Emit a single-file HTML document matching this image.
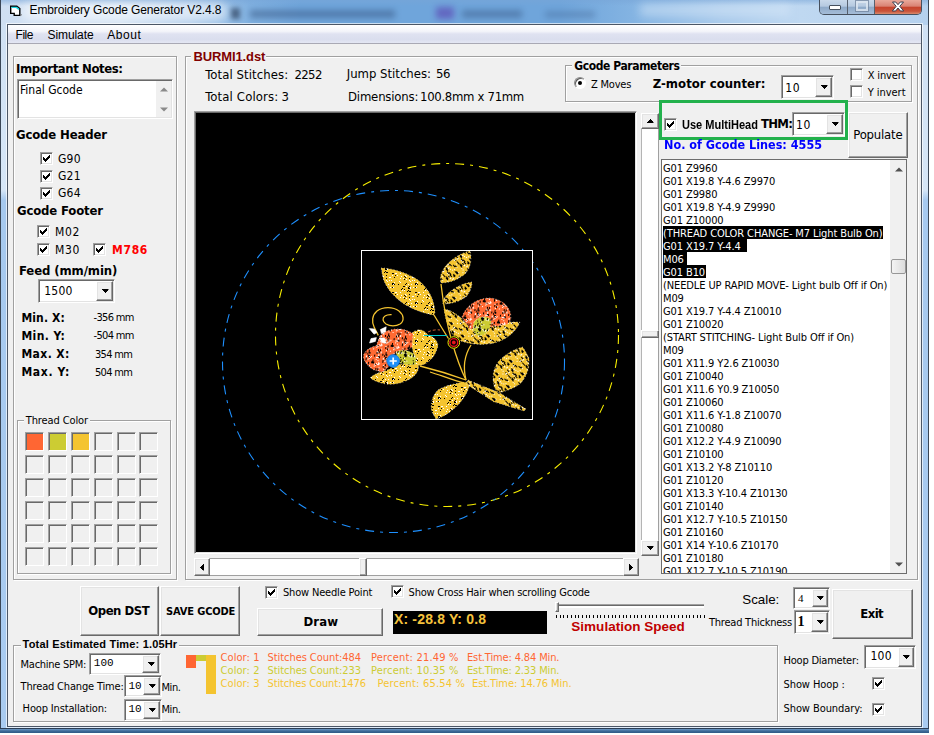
<!DOCTYPE html>
<html lang="en"><head><meta charset="utf-8"><title>Embroidery Gcode Generator V2.4.8</title>
<style>
html,body{margin:0;padding:0}
body{width:934px;height:735px;background:#fff;overflow:hidden;position:relative}
#win{position:absolute;left:0;top:0;width:929px;height:733px;background:linear-gradient(180deg,#cfe0f3 0,#d6e6f7 190px,#a6c9ef 200px,#a9cbf0 100%);overflow:hidden}
.wb{background:#3a4656}
#win div,#win span,#win svg.ar,#win svg.ck{position:absolute}
#tb{left:1px;top:0;width:927px;height:25px;background:linear-gradient(90deg,#cfdff2 0,#d3e2f3 120px,#b4cfec 190px,#7fb0e0 250px,#6fa5db 300px,#6fa5db 560px,#86b5e3 640px,#a9caeb 720px,#bfd8f1 800px,#b5d1ee 927px)}
#tbtop{left:1px;top:0;width:927px;height:6px;background:linear-gradient(180deg,rgba(120,165,215,.55),rgba(120,165,215,0))}
#tbglow{left:22px;top:3px;width:205px;height:17px;background:#fff;opacity:.55;filter:blur(5px);border-radius:8px}
#tbsm{left:250px;top:10px;width:145px;height:8px;background:#34527f;opacity:.5;filter:blur(3px)}
#tbsm3{left:462px;top:10px;width:60px;height:8px;background:#34527f;opacity:.45;filter:blur(3px)}
#tbsm4{left:436px;top:7px;width:18px;height:12px;background:#5a3fb0;opacity:.6;filter:blur(3px)}
#tbsm5{left:231px;top:8px;width:9px;height:11px;background:#1f2f4a;opacity:.6;filter:blur(2.5px)}
#tbsm6{left:545px;top:11px;width:50px;height:7px;background:#34527f;opacity:.3;filter:blur(3px)}
#tbsm2{left:640px;top:4px;width:150px;height:12px;background:#dcebfa;opacity:.5;filter:blur(5px)}
#frameB{left:0;top:728px;width:929px;height:5px;background:linear-gradient(180deg,#2c3e55 0,#2c3e55 1px,#6f9cc8 1px,#3f6a97 60%,#2f5a86)}
#clienthl{left:6px;top:23px;width:917px;height:705px;box-sizing:border-box;border:1px solid rgba(255,255,255,.65)}
#client{left:7px;top:24px;width:915px;height:703px;box-sizing:border-box;border:1px solid #4b5666;background:#f0f0f0}
#menu{left:8px;top:25px;width:913px;height:19px;background:linear-gradient(180deg,#fff 0,#f3f4fa 35%,#dfe2f1 50%,#dadeee 80%,#e4e7f3 100%);border-bottom:1px solid #a9a9b4;box-sizing:border-box}
#capb{left:819px;top:0;width:103px;height:15px;border:1px solid #46505e;border-top:none;border-radius:0 0 5px 5px;box-sizing:border-box;overflow:hidden;background:#9db9d8}
#cmin{left:0;top:0;width:27px;height:14px;background:linear-gradient(180deg,#c9d9ea 0,#b5c9e0 45%,#8ea9c8 50%,#a5bdd8 100%);border-right:1px solid #56606e}
#cmax{left:28px;top:0;width:26px;height:14px;background:linear-gradient(180deg,#c9d9ea 0,#b5c9e0 45%,#8ea9c8 50%,#a5bdd8 100%);border-right:1px solid #56606e}
#ccls{left:55px;top:0;width:46px;height:14px;background:linear-gradient(180deg,#e9a99b 0,#d98273 45%,#c6432c 50%,#c9533a 80%,#d98a6c 100%)}
#cmin i{position:absolute;left:9px;top:5px;width:10px;height:3px;background:#fff;border:1px solid #46505e;border-radius:1px}
#cmax i{position:absolute;left:8px;top:1px;width:8px;height:6px;border:2px solid #dfe8f2;outline:1px solid #7689a2;opacity:.8}
#ccls svg{position:absolute;left:16px;top:1px}
.x{white-space:pre;color:#000}
.t{font-family:'DejaVu Sans Condensed','Liberation Sans',sans-serif}
.a{font-family:'Liberation Sans','DejaVu Sans Condensed',sans-serif}
.s{font-family:'Liberation Serif','DejaVu Serif',serif}
.m{font-family:'Liberation Mono','DejaVu Sans Mono',monospace}
.b{font-weight:bold}
.gb{box-sizing:border-box;border:1px solid #a0a0a0;box-shadow:1px 1px 0 #fff, inset 1px 1px 0 #fff}
.btn{box-sizing:border-box;background:#f0f0f0;border:1px solid;border-color:#fff #696969 #696969 #fff;box-shadow:inset -1px -1px 0 #a0a0a0, inset 1px 1px 0 #e3e3e3}
.sk{box-sizing:border-box;border:1px solid;border-color:#a0a0a0 #fff #fff #a0a0a0;box-shadow:inset 1px 1px 0 #696969, inset -1px -1px 0 #e3e3e3}
.chk{background:#fff}
.ck{left:2px;top:2px}
.ck path{fill:#000}
.ar path{fill:#000}
.btn>.ar{left:50%;top:50%;transform:translate(-50%,-50%)}
.sw{box-sizing:border-box;border:1px solid;border-color:#a0a0a0 #fff #fff #a0a0a0;box-shadow:inset 1px 1px 0 #696969}
.radio{width:12px;height:12px;border-radius:50%;background:#fff;box-sizing:border-box;border:1px solid;border-color:#8c8c8c #fff #fff #8c8c8c;box-shadow:inset 1px 1px 0 #5a5a5a}
.radio i{position:absolute;left:3px;top:3px;width:4px;height:4px;border-radius:50%;background:#000}
#lb{left:662px;top:160px;width:228px;height:413px;overflow:hidden}
.hl{left:1px;height:13px;background:#000}
#ticks{width:150px;height:3px}
#ticks i{position:absolute;top:0;width:1px;height:3px;background:#000}
#art{position:absolute;left:196px;top:113px}
</style></head>
<body>
<div id="win">
<div id="tb"></div><div id="tbtop"></div><div id="tbglow"></div><div id="tbsm"></div><div id="tbsm2"></div><div id="tbsm3"></div><div id="tbsm4"></div><div id="tbsm5"></div><div id="tbsm6"></div>
<div class="wb" style="left:0;top:0;width:1px;height:733px"></div><div class="wb" style="left:928px;top:0;width:1px;height:733px"></div>
<div id="frameB"></div>
<svg style="position:absolute;left:9px;top:4px" width="14" height="14" viewBox="9 4 14 14"><path d="M10.7,6.2H16.8L19.8,8.6V15.4H14.2V13.4H10.7Z" fill="#fff" stroke="#000" stroke-width="1.4"/><path d="M11.4,7.4H16.4L19,9.4" stroke="#19d9e6" stroke-width="1.4" fill="none"/><path d="M20.6,15.6l1.4,-1.2" stroke="#7a7a7a" stroke-width="1"/></svg>
<span class="x a" style="left:29.5px;top:2px;font-size:12px;line-height:16px;letter-spacing:-0.11px">Embroidery Gcode Generator V2.4.8</span>
<div id="capb"><div id="cmin"><i></i></div><div id="cmax"><i></i></div><div id="ccls"><svg width="14" height="11" viewBox="0 0 14 11"><path d="M1.5 1h3.2L7 3.7 9.3 1h3.2L8.8 5.3 12.7 10H9.4L7 7 4.6 10H1.3l3.9-4.7z" fill="#fff" stroke="#3b3f4f" stroke-width="1"/></svg></div></div>
<div id="clienthl"></div>
<div id="client">
</div>
<div id="menu"></div>
<span class="x a" style="left:15.5px;top:27px;font-size:12px;line-height:16px;letter-spacing:-0.45px">File</span>
<span class="x a" style="left:47.6px;top:27px;font-size:12px;line-height:16px;letter-spacing:-0.10px">Simulate</span>
<span class="x a" style="left:107.3px;top:27px;font-size:12px;line-height:16px;letter-spacing:0.54px">About</span>
<div class="gb" style="left:13px;top:56px;width:164px;height:524px;"></div>
<span class="x t b" style="left:16px;top:60px;font-size:13px;line-height:17px;letter-spacing:-0.41px">Important Notes:</span>
<div class="sk" style="left:17px;top:79px;width:156px;height:40px;background:#fff"></div>
<span class="x t" style="left:20px;top:82px;font-size:12px;line-height:16px;letter-spacing:-0.01px">Final Gcode</span>
<div class="" style="left:156px;top:81px;width:15px;height:36px;background:#f0f0f0"></div>
<svg style="position:absolute;left:160px;top:87px" width="8" height="5" viewBox="0 0 8 5"><path d="M0 4.5L4 0.5 8 4.5z" fill="#8a8a8a"/></svg>
<svg style="position:absolute;left:160px;top:107px" width="8" height="5" viewBox="0 0 8 5"><path d="M0 0.5L4 4.5 8 0.5z" fill="#8a8a8a"/></svg>
<span class="x t b" style="left:16px;top:126px;font-size:13px;line-height:17px;letter-spacing:-0.15px">Gcode Header</span>
<div class="sk chk" style="left:40px;top:152px;width:13px;height:13px;"><svg class="ck" width="7" height="7" viewBox="0 0 7 7" shape-rendering="crispEdges"><path d="M0 2h1v3h-1zM1 3h1v3h-1zM2 4h1v3h-1zM3 3h1v3h-1zM4 2h1v3h-1zM5 1h1v3h-1zM6 0h1v3h-1z"/></svg></div>
<span class="x t" style="left:58px;top:151px;font-size:12px;line-height:16px;letter-spacing:0.20px">G90</span>
<div class="sk chk" style="left:40px;top:170px;width:13px;height:13px;"><svg class="ck" width="7" height="7" viewBox="0 0 7 7" shape-rendering="crispEdges"><path d="M0 2h1v3h-1zM1 3h1v3h-1zM2 4h1v3h-1zM3 3h1v3h-1zM4 2h1v3h-1zM5 1h1v3h-1zM6 0h1v3h-1z"/></svg></div>
<span class="x t" style="left:58px;top:168px;font-size:12px;line-height:16px;letter-spacing:0.20px">G21</span>
<div class="sk chk" style="left:40px;top:187px;width:13px;height:13px;"><svg class="ck" width="7" height="7" viewBox="0 0 7 7" shape-rendering="crispEdges"><path d="M0 2h1v3h-1zM1 3h1v3h-1zM2 4h1v3h-1zM3 3h1v3h-1zM4 2h1v3h-1zM5 1h1v3h-1zM6 0h1v3h-1z"/></svg></div>
<span class="x t" style="left:58px;top:185px;font-size:12px;line-height:16px;letter-spacing:0.20px">G64</span>
<span class="x t b" style="left:17px;top:202px;font-size:13px;line-height:17px;letter-spacing:-0.16px">Gcode Footer</span>
<div class="sk chk" style="left:37px;top:225px;width:13px;height:13px;"><svg class="ck" width="7" height="7" viewBox="0 0 7 7" shape-rendering="crispEdges"><path d="M0 2h1v3h-1zM1 3h1v3h-1zM2 4h1v3h-1zM3 3h1v3h-1zM4 2h1v3h-1zM5 1h1v3h-1zM6 0h1v3h-1z"/></svg></div>
<span class="x t" style="left:55px;top:224px;font-size:12px;line-height:16px;letter-spacing:0.70px">M02</span>
<div class="sk chk" style="left:37px;top:243px;width:13px;height:13px;"><svg class="ck" width="7" height="7" viewBox="0 0 7 7" shape-rendering="crispEdges"><path d="M0 2h1v3h-1zM1 3h1v3h-1zM2 4h1v3h-1zM3 3h1v3h-1zM4 2h1v3h-1zM5 1h1v3h-1zM6 0h1v3h-1z"/></svg></div>
<span class="x t" style="left:55px;top:242px;font-size:12px;line-height:16px;letter-spacing:0.70px">M30</span>
<div class="sk chk" style="left:93px;top:243px;width:13px;height:13px;"><svg class="ck" width="7" height="7" viewBox="0 0 7 7" shape-rendering="crispEdges"><path d="M0 2h1v3h-1zM1 3h1v3h-1zM2 4h1v3h-1zM3 3h1v3h-1zM4 2h1v3h-1zM5 1h1v3h-1zM6 0h1v3h-1z"/></svg></div>
<span class="x t b" style="left:112px;top:242px;font-size:12px;line-height:16px;color:#ff0000;letter-spacing:0.70px">M786</span>
<span class="x t b" style="left:19px;top:262px;font-size:13px;line-height:17px;letter-spacing:-0.10px">Feed (mm/min)</span>
<div class="sk" style="left:38px;top:279px;width:77px;height:24px;background:#fff"></div>
<div class="btn cb" style="left:96px;top:281px;width:17px;height:20px;"><svg class="ar" width="7" height="4" viewBox="0 0 7 4" shape-rendering="crispEdges"><path d="M0 0h7v1h-7zM1 1h5v1h-5zM2 2h3v1h-3zM3 3h1v1h-1z"/></svg></div>
<span class="x t" style="left:44.3px;top:283px;font-size:12px;line-height:16px;letter-spacing:0.18px">1500</span>
<span class="x t b" style="left:21.4px;top:310px;font-size:12px;line-height:16px;letter-spacing:0.14px">Min. X:</span>
<span class="x t b" style="left:21.4px;top:328px;font-size:12px;line-height:16px;letter-spacing:0.40px">Min. Y:</span>
<span class="x t b" style="left:21.4px;top:346px;font-size:12px;line-height:16px;letter-spacing:0.42px">Max. X:</span>
<span class="x t b" style="left:21.4px;top:364px;font-size:12px;line-height:16px;letter-spacing:0.67px">Max. Y:</span>
<span class="x t" style="left:93.6px;top:310px;font-size:11px;line-height:15px;letter-spacing:-0.70px">-356 mm</span>
<span class="x t" style="left:93.6px;top:328px;font-size:11px;line-height:15px;letter-spacing:-0.70px">-504 mm</span>
<span class="x t" style="left:95px;top:347px;font-size:11px;line-height:15px;letter-spacing:-0.70px">354 mm</span>
<span class="x t" style="left:95px;top:365px;font-size:11px;line-height:15px;letter-spacing:-0.70px">504 mm</span>
<div class="gb" style="left:17px;top:420px;width:154px;height:154px;"></div>
<span class="x t" style="left:23.8px;top:413px;font-size:11px;line-height:15px;letter-spacing:-0.12px;background:#f0f0f0;padding:0 2px">Thread Color</span>
<div class="sw" style="left:25px;top:432px;width:19px;height:19px;background:#ff6633"></div>
<div class="sw" style="left:48px;top:432px;width:19px;height:19px;background:#cccc33"></div>
<div class="sw" style="left:71px;top:432px;width:19px;height:19px;background:#f4c430"></div>
<div class="sw" style="left:94px;top:432px;width:19px;height:19px;background:#f0f0f0"></div>
<div class="sw" style="left:117px;top:432px;width:19px;height:19px;background:#f0f0f0"></div>
<div class="sw" style="left:139px;top:432px;width:19px;height:19px;background:#f0f0f0"></div>
<div class="sw" style="left:25px;top:455px;width:19px;height:19px;background:#f0f0f0"></div>
<div class="sw" style="left:48px;top:455px;width:19px;height:19px;background:#f0f0f0"></div>
<div class="sw" style="left:71px;top:455px;width:19px;height:19px;background:#f0f0f0"></div>
<div class="sw" style="left:94px;top:455px;width:19px;height:19px;background:#f0f0f0"></div>
<div class="sw" style="left:117px;top:455px;width:19px;height:19px;background:#f0f0f0"></div>
<div class="sw" style="left:139px;top:455px;width:19px;height:19px;background:#f0f0f0"></div>
<div class="sw" style="left:25px;top:478px;width:19px;height:19px;background:#f0f0f0"></div>
<div class="sw" style="left:48px;top:478px;width:19px;height:19px;background:#f0f0f0"></div>
<div class="sw" style="left:71px;top:478px;width:19px;height:19px;background:#f0f0f0"></div>
<div class="sw" style="left:94px;top:478px;width:19px;height:19px;background:#f0f0f0"></div>
<div class="sw" style="left:117px;top:478px;width:19px;height:19px;background:#f0f0f0"></div>
<div class="sw" style="left:139px;top:478px;width:19px;height:19px;background:#f0f0f0"></div>
<div class="sw" style="left:25px;top:501px;width:19px;height:19px;background:#f0f0f0"></div>
<div class="sw" style="left:48px;top:501px;width:19px;height:19px;background:#f0f0f0"></div>
<div class="sw" style="left:71px;top:501px;width:19px;height:19px;background:#f0f0f0"></div>
<div class="sw" style="left:94px;top:501px;width:19px;height:19px;background:#f0f0f0"></div>
<div class="sw" style="left:117px;top:501px;width:19px;height:19px;background:#f0f0f0"></div>
<div class="sw" style="left:139px;top:501px;width:19px;height:19px;background:#f0f0f0"></div>
<div class="sw" style="left:25px;top:524px;width:19px;height:19px;background:#f0f0f0"></div>
<div class="sw" style="left:48px;top:524px;width:19px;height:19px;background:#f0f0f0"></div>
<div class="sw" style="left:71px;top:524px;width:19px;height:19px;background:#f0f0f0"></div>
<div class="sw" style="left:94px;top:524px;width:19px;height:19px;background:#f0f0f0"></div>
<div class="sw" style="left:117px;top:524px;width:19px;height:19px;background:#f0f0f0"></div>
<div class="sw" style="left:139px;top:524px;width:19px;height:19px;background:#f0f0f0"></div>
<div class="sw" style="left:25px;top:547px;width:19px;height:19px;background:#f0f0f0"></div>
<div class="sw" style="left:48px;top:547px;width:19px;height:19px;background:#f0f0f0"></div>
<div class="sw" style="left:71px;top:547px;width:19px;height:19px;background:#f0f0f0"></div>
<div class="sw" style="left:94px;top:547px;width:19px;height:19px;background:#f0f0f0"></div>
<div class="sw" style="left:117px;top:547px;width:19px;height:19px;background:#f0f0f0"></div>
<div class="sw" style="left:139px;top:547px;width:19px;height:19px;background:#f0f0f0"></div>
<div class="gb" style="left:185px;top:56px;width:733px;height:524px;"></div>
<span class="x a b" style="left:191.4px;top:48px;font-size:13px;line-height:17px;color:#800000;letter-spacing:-0.11px;background:#f0f0f0;padding:0 1px 0 2px">BURMI1.dst</span>
<span class="x t" style="left:205.2px;top:66px;font-size:13px;line-height:17px;letter-spacing:0.09px">Total Stitches:</span>
<span class="x t" style="left:294.4px;top:66px;font-size:13px;line-height:17px;letter-spacing:-0.59px">2252</span>
<span class="x t" style="left:205.2px;top:88px;font-size:13px;line-height:17px;letter-spacing:0.14px">Total Colors:</span>
<span class="x t" style="left:281.5px;top:88px;font-size:13px;line-height:17px">3</span>
<span class="x t" style="left:346.7px;top:65px;font-size:13px;line-height:17px;letter-spacing:-0.00px">Jump Stitches:</span>
<span class="x t" style="left:436px;top:65px;font-size:13px;line-height:17px;letter-spacing:-0.39px">56</span>
<span class="x t" style="left:348px;top:88px;font-size:13px;line-height:17px;letter-spacing:-0.18px">Dimensions:</span>
<span class="x t" style="left:420px;top:88px;font-size:13px;line-height:17px;letter-spacing:-0.31px">100.8mm x 71mm</span>
<div class="gb" style="left:565px;top:65px;width:347px;height:37px;"></div>
<span class="x t b" style="left:572.3px;top:58px;font-size:12px;line-height:16px;letter-spacing:-0.41px;background:#f0f0f0;padding:0 1px 0 2px">Gcode Parameters</span>
<div class="radio" style="left:574px;top:77px"><i></i></div>
<span class="x t" style="left:591px;top:77px;font-size:11px;line-height:15px;letter-spacing:-0.22px">Z Moves</span>
<span class="x t b" style="left:652.7px;top:75px;font-size:13px;line-height:17px;letter-spacing:0.03px">Z-motor counter:</span>
<div class="sk" style="left:781px;top:75px;width:53px;height:24px;background:#fff"></div>
<div class="btn cb" style="left:815px;top:77px;width:17px;height:20px;"><svg class="ar" width="7" height="4" viewBox="0 0 7 4" shape-rendering="crispEdges"><path d="M0 0h7v1h-7zM1 1h5v1h-5zM2 2h3v1h-3zM3 3h1v1h-1z"/></svg></div>
<span class="x t" style="left:785.3px;top:80px;font-size:12px;line-height:16px;letter-spacing:0.70px">10</span>
<div class="sk chk" style="left:850px;top:68px;width:13px;height:13px;"></div>
<span class="x t" style="left:867.7px;top:68px;font-size:11px;line-height:15px;letter-spacing:-0.15px">X invert</span>
<div class="sk chk" style="left:850px;top:85px;width:13px;height:13px;"></div>
<span class="x t" style="left:867.7px;top:85px;font-size:11px;line-height:15px;letter-spacing:-0.04px">Y invert</span>
<div class="sk" style="left:194px;top:111px;width:443px;height:443px;background:#000"></div>
<svg id="art" width="439" height="439" viewBox="196 113 439 439">
<defs>
<pattern id="pg" width="23" height="19" patternUnits="userSpaceOnUse" patternTransform="rotate(0)"><rect width="23" height="19" fill="#f4c430"/><path d="M10 4h1v1h-1zM12 1h1v1h-1zM2 17h1v1h-1zM3 11h1v1h-1zM18 1h1v1h-1zM16 6h1v1h-1zM1 2h1v1h-1zM13 13h1v1h-1zM2 7h1v1h-1zM13 1h1v1h-1zM18 3h1v1h-1zM7 18h1v1h-1zM1 18h1v1h-1zM18 12h1v1h-1zM1 7h1v1h-1zM1 17h1v1h-1zM4 9h1v1h-1zM13 4h1v1h-1zM17 3h1v1h-1zM18 9h1v1h-1zM17 5h1v1h-1zM3 18h1v1h-1zM18 6h1v1h-1zM11 3h1v1h-1zM17 2h1v1h-1zM19 6h1v1h-1zM15 17h1v1h-1zM13 10h1v1h-1zM14 18h1v1h-1zM14 11h1v1h-1z" fill="#000"/><path d="M9 7h1v1h-1zM5 7h1v1h-1zM2 18h1v1h-1zM9 16h1v1h-1zM15 10h1v1h-1zM14 9h1v1h-1zM19 2h1v1h-1zM3 16h1v1h-1zM13 5h1v1h-1zM15 13h1v1h-1zM17 18h1v1h-1zM10 10h1v1h-1zM22 11h1v1h-1zM19 15h1v1h-1zM18 14h1v1h-1zM2 2h1v1h-1zM8 15h1v1h-1zM22 2h1v1h-1zM1 9h1v1h-1zM20 18h1v1h-1zM21 14h1v1h-1zM9 12h1v1h-1zM21 11h1v1h-1zM0 14h1v1h-1zM11 5h1v1h-1zM19 3h1v1h-1zM15 1h1v1h-1zM6 9h1v1h-1zM4 7h1v1h-1zM12 12h1v1h-1z" fill="#fff"/></pattern>
<pattern id="ph" width="19" height="17" patternUnits="userSpaceOnUse" patternTransform="rotate(-42)"><rect width="19" height="17" fill="#f4c430"/><path d="M15 2h1v3h-1zM5 14h1v3h-1zM12 8h1v3h-1zM4 13h1v3h-1zM17 8h1v3h-1zM13 11h1v3h-1zM12 7h1v3h-1zM4 2h1v3h-1zM5 4h1v3h-1zM7 7h1v3h-1zM0 15h1v3h-1zM18 5h1v3h-1zM8 9h1v3h-1zM0 4h1v3h-1zM18 10h1v3h-1zM4 16h1v3h-1zM1 14h1v3h-1zM17 12h1v3h-1zM12 12h1v3h-1zM12 3h1v3h-1zM15 12h1v3h-1z" fill="#000"/><path d="M1 6h1v1h-1zM2 6h1v1h-1zM14 5h1v1h-1zM3 10h1v1h-1zM1 3h1v1h-1zM17 3h1v1h-1zM11 0h1v1h-1zM12 4h1v1h-1zM8 11h1v1h-1zM11 15h1v1h-1zM3 3h1v1h-1zM15 14h1v1h-1zM15 15h1v1h-1zM9 2h1v1h-1zM4 3h1v1h-1zM10 8h1v1h-1zM15 5h1v1h-1zM16 0h1v1h-1zM6 16h1v1h-1zM11 4h1v1h-1zM17 0h1v1h-1zM16 9h1v1h-1zM2 8h1v1h-1zM16 11h1v1h-1zM5 11h1v1h-1z" fill="#fff"/></pattern>
<pattern id="po" width="17" height="19" patternUnits="userSpaceOnUse" patternTransform="rotate(8)"><rect width="17" height="19" fill="#ff6a33"/><path d="M7 17h1v2h-1zM16 10h1v2h-1zM7 6h1v2h-1zM7 12h1v2h-1zM16 15h1v2h-1zM11 0h1v2h-1zM0 8h1v2h-1zM15 8h1v2h-1zM6 11h1v2h-1zM14 11h1v2h-1zM11 2h1v2h-1zM7 3h1v2h-1zM7 15h1v2h-1zM6 10h1v2h-1zM6 15h1v2h-1zM0 15h1v2h-1zM3 12h1v2h-1zM5 13h1v2h-1zM10 2h1v2h-1zM12 14h1v2h-1zM12 2h1v2h-1zM5 5h1v2h-1zM4 0h1v2h-1zM4 18h1v2h-1zM14 4h1v2h-1z" fill="#000"/><path d="M15 11h1v1h-1zM4 17h1v1h-1zM0 3h1v1h-1zM16 4h1v1h-1zM13 6h1v1h-1zM6 0h1v1h-1zM8 6h1v1h-1zM9 16h1v1h-1zM7 18h1v1h-1zM10 8h1v1h-1zM13 4h1v1h-1zM1 11h1v1h-1zM14 18h1v1h-1zM16 13h1v1h-1zM4 16h1v1h-1zM16 0h1v1h-1zM14 5h1v1h-1zM0 4h1v1h-1zM5 4h1v1h-1zM15 3h1v1h-1zM1 10h1v1h-1zM16 16h1v1h-1zM1 7h1v1h-1zM6 8h1v1h-1zM1 3h1v1h-1zM16 14h1v1h-1zM0 2h1v1h-1zM14 10h1v1h-1zM14 16h1v1h-1zM15 16h1v1h-1zM7 16h1v1h-1zM8 17h1v1h-1z" fill="#fff"/></pattern>
<pattern id="py" width="13" height="11" patternUnits="userSpaceOnUse" patternTransform="rotate(15)"><rect width="13" height="11" fill="#cccc33"/><path d="M3 7h1v2h-1zM2 6h1v2h-1zM1 6h1v2h-1zM7 5h1v2h-1zM1 10h1v2h-1zM3 6h1v2h-1zM1 3h1v2h-1zM10 4h1v2h-1zM12 1h1v2h-1zM12 2h1v2h-1zM11 10h1v2h-1zM10 5h1v2h-1zM2 4h1v2h-1zM2 7h1v2h-1zM3 1h1v2h-1z" fill="#000"/><path d="M6 7h1v1h-1zM2 10h1v1h-1zM3 2h1v1h-1zM11 6h1v1h-1zM8 6h1v1h-1zM5 6h1v1h-1zM3 5h1v1h-1zM5 1h1v1h-1zM11 5h1v1h-1zM0 5h1v1h-1zM8 7h1v1h-1z" fill="#fff"/></pattern>
</defs>
<rect x="196" y="113" width="439" height="439" fill="#000"/>
<circle cx="447" cy="335" r="171.5" fill="none" stroke="#f7ee00" stroke-width="1.1" stroke-dasharray="9 6 3 6"/>
<circle cx="393.5" cy="361.5" r="171" fill="none" stroke="#1e90ff" stroke-width="1.1" stroke-dasharray="9 6 3 6"/>
<rect x="361.5" y="250.5" width="171" height="169" fill="#000" stroke="#fff" stroke-width="1"/>
<g stroke="#fff" stroke-width=".5" stroke-dasharray="1 2.2">
<path fill="url(#pg)" d="M381,268 C392,268 408,273 418,280 C428,288 434,298 435,312 L434,315 C425,314 412,309 404,304 C394,297 386,288 383,278 Z"/>
<path fill="url(#ph)" d="M470,251 C460,253 448,261 443,270 C440,275 440,280 441,283 C450,283 460,279 466,273 C471,267 472,258 470,251Z"/>
<path fill="url(#ph)" d="M472,282 C462,283 450,290 445,297 C443,300 442,303 443,304 C452,304 461,301 467,296 C470,292 472,287 472,282Z"/>
<path fill="url(#ph)" d="M444,309 C450,310 458,314 463,320 L470,328 L490,326 L508,322 L520,322 C516,332 506,340 494,343 C482,346 468,344 458,340 C450,334 446,322 444,309Z"/>
<path fill="url(#po)" d="M462,317 C466,305 478,298 490,298 C502,299 511,307 511,318 C510,322 508,324 505,325 L490,327 L470,329 Z"/>
<path fill="url(#py)" d="M474,322 C478,316 488,315 491,320 C492,328 486,336 478,336 C473,334 472,327 474,322Z"/>
<path fill="url(#pg)" d="M412,333 C416,329 422,328 427,334 C434,337 438,341 438,346 C436,354 432,359 428,362 C424,365 420,366 416,365 L412,347 Z"/>
<path fill="url(#pg)" d="M370,378 C376,372 384,372 392,368 C398,364 404,364 410,362 L418,364 C420,370 416,376 408,380 C400,384 392,385 386,384 C380,383 374,381 370,378Z"/>
<path fill="url(#po)" d="M380,336 C384,331 392,328.5 400,329 C406,329.5 411,332 413,334 L412,347 C406,352 398,352 394,354 C393,362 388,369 382,372 L374,370 C366,366 362,358 364,354 C366,350 370,347 376,346 Z"/>
<path fill="url(#py)" d="M396,352 C402,349 410,350 416,356 L416,364 C410,366 402,364 398,362 Z"/>
<path fill="url(#ph)" d="M523,347 C514,349 504,355 498,362 C493,369 492,378 494,386 L497,393 C505,392 514,388 520,384 C526,378 530,368 529,358 Z"/>
<path fill="url(#pg)" d="M470,382 C460,382 446,385 438,390 C432,396 430,404 432,412 L436,419 C444,417 452,411 459,404 C465,397 469,390 470,382Z"/>
<path fill="url(#ph)" d="M468,380 L500,393 L526,409 L524,411 L494,402 L466,384Z"/>
</g>
<g fill="none" stroke="#f4c430" stroke-width="1.3">
<path d="M378.3,335.4 L374.2,327.2 C371.5,322 372,315 377,311 C383,306.5 393,306.5 399,311 C404,315 404.5,321 400,324 C396,326.5 390,326.5 386,324 C382.5,321.5 382,318 385,316 C387,314.6 389.5,314.5 391.6,314.6"/>
<path d="M466,380 C460,368 456,356 452,342 C448,328 444,310 441,284"/>
<path d="M434,315 C440,325 446,335 452,344"/>
<path d="M466,380 C463,368 464,356 471,345"/>
<path d="M466,380 C455,376 440,371 420,366"/>
<path d="M464,383 C452,380 440,375 430,372"/>
<path d="M497,393 L482,387"/>
</g>
<path d="M369.3,328.6 L374.5,329 L377,332.6 L374,334.2 ZM386.2,326.8 L385.6,331.8 L381.4,333.6 L380.4,329.6 ZM369.6,343 L371,338.6 L376.4,337.6 L375.4,341.4 ZM386.4,343.4 L381.6,342.6 L380,338 L384.4,338 Z" fill="#fff" stroke="#fff" stroke-width=".6"/>
<path d="M424,335.5H447" stroke="#00c8c8" stroke-width="1"/>
<path d="M428,332 C432,330 436,329.5 440,330" stroke="#ff7a40" stroke-width=".8" stroke-dasharray="3 2" fill="none"/>
<circle cx="453.8" cy="342.5" r="6.6" fill="#000"/>
<circle cx="453.8" cy="342.5" r="5.8" fill="none" stroke="#f7ee00" stroke-width="1"/>
<circle cx="453.8" cy="342.5" r="3.9" fill="none" stroke="#e8141c" stroke-width="1.4"/>
<circle cx="453.8" cy="342.5" r="1.9" fill="#e8141c"/>
<circle cx="393.2" cy="361" r="6.4" fill="#1e8ff8" stroke="#1670cc" stroke-width=".8"/>
<path d="M389.6,361H396.8M393.2,357.4V364.6" stroke="#fff" stroke-width="1.7"/>
</svg>

<div class="" style="left:641px;top:113px;width:18px;height:443px;background:#fff;border-left:1px solid #b4b4b4;border-right:1px solid #a0a0a0;box-sizing:border-box"></div>
<div class="btn" style="left:641px;top:113px;width:18px;height:16px;"><svg class="ar" width="7" height="4" viewBox="0 0 7 4" shape-rendering="crispEdges"><path d="M0 3h7v1h-7zM1 2h5v1h-5zM2 1h3v1h-3zM3 0h1v1h-1z"/></svg></div>
<div class="btn" style="left:641px;top:540px;width:18px;height:16px;"><svg class="ar" width="7" height="4" viewBox="0 0 7 4" shape-rendering="crispEdges"><path d="M0 0h7v1h-7zM1 1h5v1h-5zM2 2h3v1h-3zM3 3h1v1h-1z"/></svg></div>
<div class="btn" style="left:641px;top:330px;width:18px;height:8px;"></div>
<div class="" style="left:194px;top:558px;width:445px;height:18px;background:#fff;border-top:1px solid #a0a0a0;border-bottom:1px solid #a0a0a0;box-sizing:border-box"></div>
<div class="btn" style="left:194px;top:558px;width:16px;height:18px;"><svg class="ar" width="4" height="7" viewBox="0 0 4 7" shape-rendering="crispEdges"><path d="M3 0h1v7h-1zM2 1h1v5h-1zM1 2h1v3h-1zM0 3h1v1h-1z"/></svg></div>
<div class="btn" style="left:623px;top:558px;width:16px;height:18px;"><svg class="ar" width="4" height="7" viewBox="0 0 4 7" shape-rendering="crispEdges"><path d="M0 0h1v7h-1zM1 1h1v5h-1zM2 2h1v3h-1zM3 3h1v1h-1z"/></svg></div>
<div class="btn" style="left:359px;top:558px;width:8px;height:18px;"></div>
<div class="sk chk" style="left:664px;top:118px;width:13px;height:13px;"><svg class="ck" width="7" height="7" viewBox="0 0 7 7" shape-rendering="crispEdges"><path d="M0 2h1v3h-1zM1 3h1v3h-1zM2 4h1v3h-1zM3 3h1v3h-1zM4 2h1v3h-1zM5 1h1v3h-1zM6 0h1v3h-1z"/></svg></div>
<span class="x a b" style="left:682.4px;top:117px;font-size:12px;line-height:16px;transform:scaleX(0.919);transform-origin:0 50%">Use MultiHead</span>
<span class="x t b" style="left:761px;top:115px;font-size:13px;line-height:17px;letter-spacing:-0.70px">THM:</span>
<div class="sk" style="left:792px;top:112px;width:53px;height:24px;background:#fff"></div>
<div class="btn cb" style="left:826px;top:114px;width:17px;height:20px;"><svg class="ar" width="7" height="4" viewBox="0 0 7 4" shape-rendering="crispEdges"><path d="M0 0h7v1h-7zM1 1h5v1h-5zM2 2h3v1h-3zM3 3h1v1h-1z"/></svg></div>
<span class="x t" style="left:796px;top:117px;font-size:12px;line-height:16px;letter-spacing:0.70px">10</span>
<div class="" style="left:659px;top:100px;width:189px;height:40px;border:3px solid #22b14c;box-sizing:border-box"></div>
<div class="btn" style="left:848px;top:112px;width:60px;height:46px;"></div>
<span class="x t" style="left:853.3px;top:126px;font-size:13px;line-height:17px;letter-spacing:-0.21px">Populate</span>
<span class="x t b" style="left:664.3px;top:136px;font-size:13px;line-height:17px;color:#0000ff;transform:scaleX(0.961);transform-origin:0 50%">No. of Gcode Lines: 4555</span>
<div class="" style="left:661px;top:159px;width:246px;height:415px;background:#fff;border:1px solid #6d6d6d;box-sizing:border-box;overflow:hidden"></div>
<div class="" style="left:890px;top:160px;width:16px;height:413px;background:#f0f0f0"></div>
<svg style="position:absolute;left:895px;top:167px" width="8" height="5" viewBox="0 0 8 5"><path d="M0 4.5L4 0.5 8 4.5z" fill="#505050"/></svg>
<svg style="position:absolute;left:895px;top:562px" width="8" height="5" viewBox="0 0 8 5"><path d="M0 0.5L4 4.5 8 0.5z" fill="#505050"/></svg>
<div class="" style="left:891px;top:259px;width:15px;height:15px;background:linear-gradient(90deg,#f4f4f4,#dcdcdc);border:1px solid #979797;border-radius:2px;box-sizing:border-box"></div>
<div id="lb">
<span class="x t" style="left:1px;top:2px;font-size:11px;line-height:13px;letter-spacing:-0.11px">G01 Z9960</span>
<span class="x t" style="left:1px;top:15px;font-size:11px;line-height:13px;letter-spacing:-0.11px">G01 X19.8 Y-4.6 Z9970</span>
<span class="x t" style="left:1px;top:28px;font-size:11px;line-height:13px;letter-spacing:-0.11px">G01 Z9980</span>
<span class="x t" style="left:1px;top:41px;font-size:11px;line-height:13px;letter-spacing:-0.11px">G01 X19.8 Y-4.9 Z9990</span>
<span class="x t" style="left:1px;top:54px;font-size:11px;line-height:13px;letter-spacing:-0.11px">G01 Z10000</span>
<div class="hl" style="top:66px;width:220px"></div>
<span class="x t" style="left:1px;top:67px;font-size:11px;line-height:13px;color:#fff;letter-spacing:-0.11px">(THREAD COLOR CHANGE- M7 Light Bulb On)</span>
<div class="hl" style="top:79px;width:84px"></div>
<span class="x t" style="left:1px;top:80px;font-size:11px;line-height:13px;color:#fff;letter-spacing:-0.11px">G01 X19.7 Y-4.4</span>
<div class="hl" style="top:92px;width:23.5px"></div>
<span class="x t" style="left:1px;top:93px;font-size:11px;line-height:13px;color:#fff;letter-spacing:-0.11px">M06</span>
<div class="hl" style="top:105px;width:43px"></div>
<span class="x t" style="left:1px;top:106px;font-size:11px;line-height:13px;color:#fff;letter-spacing:-0.11px">G01 B10</span>
<span class="x t" style="left:1px;top:119px;font-size:11px;line-height:13px;letter-spacing:-0.11px">(NEEDLE UP RAPID MOVE- Light bulb Off if On)</span>
<span class="x t" style="left:1px;top:132px;font-size:11px;line-height:13px;letter-spacing:-0.11px">M09</span>
<span class="x t" style="left:1px;top:145px;font-size:11px;line-height:13px;letter-spacing:-0.11px">G01 X19.7 Y-4.4 Z10010</span>
<span class="x t" style="left:1px;top:158px;font-size:11px;line-height:13px;letter-spacing:-0.11px">G01 Z10020</span>
<span class="x t" style="left:1px;top:171px;font-size:11px;line-height:13px;letter-spacing:-0.11px">(START STITCHING- Light Bulb Off if On)</span>
<span class="x t" style="left:1px;top:184px;font-size:11px;line-height:13px;letter-spacing:-0.11px">M09</span>
<span class="x t" style="left:1px;top:197px;font-size:11px;line-height:13px;letter-spacing:-0.11px">G01 X11.9 Y2.6 Z10030</span>
<span class="x t" style="left:1px;top:210px;font-size:11px;line-height:13px;letter-spacing:-0.11px">G01 Z10040</span>
<span class="x t" style="left:1px;top:223px;font-size:11px;line-height:13px;letter-spacing:-0.11px">G01 X11.6 Y0.9 Z10050</span>
<span class="x t" style="left:1px;top:236px;font-size:11px;line-height:13px;letter-spacing:-0.11px">G01 Z10060</span>
<span class="x t" style="left:1px;top:249px;font-size:11px;line-height:13px;letter-spacing:-0.11px">G01 X11.6 Y-1.8 Z10070</span>
<span class="x t" style="left:1px;top:262px;font-size:11px;line-height:13px;letter-spacing:-0.11px">G01 Z10080</span>
<span class="x t" style="left:1px;top:275px;font-size:11px;line-height:13px;letter-spacing:-0.11px">G01 X12.2 Y-4.9 Z10090</span>
<span class="x t" style="left:1px;top:288px;font-size:11px;line-height:13px;letter-spacing:-0.11px">G01 Z10100</span>
<span class="x t" style="left:1px;top:301px;font-size:11px;line-height:13px;letter-spacing:-0.11px">G01 X13.2 Y-8 Z10110</span>
<span class="x t" style="left:1px;top:314px;font-size:11px;line-height:13px;letter-spacing:-0.11px">G01 Z10120</span>
<span class="x t" style="left:1px;top:327px;font-size:11px;line-height:13px;letter-spacing:-0.11px">G01 X13.3 Y-10.4 Z10130</span>
<span class="x t" style="left:1px;top:340px;font-size:11px;line-height:13px;letter-spacing:-0.11px">G01 Z10140</span>
<span class="x t" style="left:1px;top:353px;font-size:11px;line-height:13px;letter-spacing:-0.11px">G01 X12.7 Y-10.5 Z10150</span>
<span class="x t" style="left:1px;top:366px;font-size:11px;line-height:13px;letter-spacing:-0.11px">G01 Z10160</span>
<span class="x t" style="left:1px;top:379px;font-size:11px;line-height:13px;letter-spacing:-0.11px">G01 X14 Y-10.6 Z10170</span>
<span class="x t" style="left:1px;top:392px;font-size:11px;line-height:13px;letter-spacing:-0.11px">G01 Z10180</span>
<span class="x t" style="left:1px;top:405px;font-size:11px;line-height:13px;letter-spacing:-0.11px">G01 X12.7 Y-10.5 Z10190</span>
</div>
<div class="btn" style="left:80px;top:586px;width:79px;height:50px;"></div>
<span class="x t b" style="left:88.3px;top:602px;font-size:13px;line-height:17px;letter-spacing:-0.48px">Open DST</span>
<div class="btn" style="left:160px;top:586px;width:80px;height:50px;"></div>
<span class="x t b" style="left:166px;top:604px;font-size:11px;line-height:15px;letter-spacing:-0.15px">SAVE GCODE</span>
<div class="sk chk" style="left:265px;top:586px;width:13px;height:13px;"><svg class="ck" width="7" height="7" viewBox="0 0 7 7" shape-rendering="crispEdges"><path d="M0 2h1v3h-1zM1 3h1v3h-1zM2 4h1v3h-1zM3 3h1v3h-1zM4 2h1v3h-1zM5 1h1v3h-1zM6 0h1v3h-1z"/></svg></div>
<span class="x t" style="left:283px;top:585px;font-size:11px;line-height:15px;letter-spacing:-0.18px">Show Needle Point</span>
<div class="sk chk" style="left:391px;top:585px;width:13px;height:13px;"><svg class="ck" width="7" height="7" viewBox="0 0 7 7" shape-rendering="crispEdges"><path d="M0 2h1v3h-1zM1 3h1v3h-1zM2 4h1v3h-1zM3 3h1v3h-1zM4 2h1v3h-1zM5 1h1v3h-1zM6 0h1v3h-1z"/></svg></div>
<span class="x t" style="left:408.6px;top:585px;font-size:11px;line-height:15px;letter-spacing:-0.23px">Show Cross Hair when scrolling Gcode</span>
<div class="btn" style="left:257px;top:608px;width:126px;height:28px;"></div>
<span class="x t b" style="left:303.5px;top:613px;font-size:13px;line-height:17px;letter-spacing:0.10px">Draw</span>
<div class="" style="left:393px;top:611px;width:154px;height:23px;background:#000"></div>
<span class="x a b" style="left:394px;top:610px;font-size:14px;line-height:18px;color:#f5c23c;letter-spacing:0.16px">X: -28.8 Y: 0.8</span>
<div class="" style="left:556px;top:604px;width:148px;height:4px;background:#fff;border-top:1px solid #a0a0a0;box-shadow:inset 0 1px 0 #696969;box-sizing:border-box"></div>
<div class="btn" style="left:555px;top:602px;width:4px;height:10px;"></div>
<div id="ticks" style="left:556px;top:615px"><i style="left:0.0px"></i><i style="left:3.7px"></i><i style="left:7.4px"></i><i style="left:11.1px"></i><i style="left:14.8px"></i><i style="left:18.5px"></i><i style="left:22.2px"></i><i style="left:25.9px"></i><i style="left:29.6px"></i><i style="left:33.3px"></i><i style="left:37.0px"></i><i style="left:40.7px"></i><i style="left:44.4px"></i><i style="left:48.1px"></i><i style="left:51.8px"></i><i style="left:55.5px"></i><i style="left:59.2px"></i><i style="left:62.9px"></i><i style="left:66.6px"></i><i style="left:70.3px"></i><i style="left:74.0px"></i><i style="left:77.7px"></i><i style="left:81.4px"></i><i style="left:85.1px"></i><i style="left:88.8px"></i><i style="left:92.5px"></i><i style="left:96.2px"></i><i style="left:99.9px"></i><i style="left:103.6px"></i><i style="left:107.3px"></i><i style="left:111.0px"></i><i style="left:114.7px"></i><i style="left:118.4px"></i><i style="left:122.1px"></i><i style="left:125.8px"></i><i style="left:129.5px"></i><i style="left:133.2px"></i><i style="left:136.9px"></i><i style="left:140.6px"></i><i style="left:144.3px"></i><i style="left:148.0px"></i></div>
<span class="x a b" style="left:571.3px;top:618px;font-size:13.5px;line-height:18px;color:#c00000;letter-spacing:0.02px">Simulation Speed</span>
<span class="x a" style="left:742.3px;top:591px;font-size:13.33px;line-height:17px;letter-spacing:-0.01px">Scale:</span>
<div class="sk" style="left:793px;top:587px;width:37px;height:22px;background:#fff"></div>
<div class="btn cb" style="left:812px;top:589px;width:16px;height:18px;"><svg class="ar" width="7" height="4" viewBox="0 0 7 4" shape-rendering="crispEdges"><path d="M0 0h7v1h-7zM1 1h5v1h-5zM2 2h3v1h-3zM3 3h1v1h-1z"/></svg></div>
<span class="x s" style="left:798px;top:591px;font-size:11px;line-height:15px">4</span>
<span class="x t" style="left:709px;top:615px;font-size:11px;line-height:15px;letter-spacing:-0.23px">Thread Thickness</span>
<div class="sk" style="left:794px;top:610px;width:36px;height:24px;background:#fff"></div>
<div class="btn cb" style="left:811px;top:612px;width:17px;height:20px;"><svg class="ar" width="7" height="4" viewBox="0 0 7 4" shape-rendering="crispEdges"><path d="M0 0h7v1h-7zM1 1h5v1h-5zM2 2h3v1h-3zM3 3h1v1h-1z"/></svg></div>
<span class="x s b" style="left:797.6px;top:613px;font-size:14px;line-height:18px">1</span>
<div class="btn" style="left:832px;top:589px;width:81px;height:50px;"></div>
<span class="x t b" style="left:860.3px;top:605px;font-size:13px;line-height:17px;letter-spacing:-0.58px">Exit</span>
<div class="gb" style="left:13px;top:645px;width:765px;height:77px;"></div>
<span class="x a b" style="left:20.6px;top:637px;font-size:11px;line-height:15px;letter-spacing:0.17px;background:#f0f0f0;padding:0 2px">Total Estimated Time: 1.05Hr</span>
<span class="x t" style="left:20.6px;top:657px;font-size:11px;line-height:15px;letter-spacing:-0.27px">Machine SPM:</span>
<div class="sk" style="left:89px;top:653px;width:72px;height:22px;background:#fff"></div>
<div class="btn cb" style="left:142px;top:655px;width:17px;height:18px;"><svg class="ar" width="7" height="4" viewBox="0 0 7 4" shape-rendering="crispEdges"><path d="M0 0h7v1h-7zM1 1h5v1h-5zM2 2h3v1h-3zM3 3h1v1h-1z"/></svg></div>
<span class="x m" style="left:93.8px;top:656px;font-size:11px;line-height:15px">100</span>
<span class="x t" style="left:20.6px;top:679px;font-size:11px;line-height:15px;letter-spacing:-0.17px">Thread Change Time:</span>
<div class="sk" style="left:124px;top:675px;width:38px;height:22px;background:#fff"></div>
<div class="btn cb" style="left:143px;top:677px;width:17px;height:18px;"><svg class="ar" width="7" height="4" viewBox="0 0 7 4" shape-rendering="crispEdges"><path d="M0 0h7v1h-7zM1 1h5v1h-5zM2 2h3v1h-3zM3 3h1v1h-1z"/></svg></div>
<span class="x m" style="left:128.5px;top:679px;font-size:11px;line-height:15px">10</span>
<span class="x t" style="left:161.4px;top:680px;font-size:11px;line-height:15px;letter-spacing:-0.37px">Min.</span>
<span class="x t" style="left:22.6px;top:701px;font-size:11px;line-height:15px;letter-spacing:-0.15px">Hoop Installation:</span>
<div class="sk" style="left:124px;top:699px;width:38px;height:22px;background:#fff"></div>
<div class="btn cb" style="left:143px;top:701px;width:17px;height:18px;"><svg class="ar" width="7" height="4" viewBox="0 0 7 4" shape-rendering="crispEdges"><path d="M0 0h7v1h-7zM1 1h5v1h-5zM2 2h3v1h-3zM3 3h1v1h-1z"/></svg></div>
<span class="x m" style="left:128.5px;top:702px;font-size:11px;line-height:15px">10</span>
<span class="x t" style="left:161.4px;top:702px;font-size:11px;line-height:15px;letter-spacing:-0.37px">Min.</span>
<div class="" style="left:186px;top:655px;width:10px;height:13px;background:#ff6633"></div>
<div class="" style="left:196px;top:655px;width:10px;height:6px;background:#cccc33"></div>
<div class="" style="left:206px;top:655px;width:10px;height:39px;background:#f4c430"></div>
<span class="x t" style="left:220.5px;top:650px;font-size:11px;line-height:15px;color:#ff6633;letter-spacing:0.08px">Color: 1</span>
<span class="x t" style="left:267.5px;top:650px;font-size:11px;line-height:15px;color:#ff6633;letter-spacing:-0.06px">Stitches Count:484</span>
<span class="x t" style="left:371px;top:650px;font-size:11px;line-height:15px;color:#ff6633;letter-spacing:0.20px">Percent: 21.49 %</span>
<span class="x t" style="left:467px;top:650px;font-size:11px;line-height:15px;color:#ff6633;letter-spacing:-0.14px">Est.Time: 4.84 Min.</span>
<span class="x t" style="left:220.5px;top:663px;font-size:11px;line-height:15px;color:#cccc33;letter-spacing:0.08px">Color: 2</span>
<span class="x t" style="left:267.5px;top:663px;font-size:11px;line-height:15px;color:#cccc33;letter-spacing:-0.06px">Stitches Count:233</span>
<span class="x t" style="left:371px;top:663px;font-size:11px;line-height:15px;color:#cccc33;letter-spacing:0.20px">Percent: 10.35 %</span>
<span class="x t" style="left:467px;top:663px;font-size:11px;line-height:15px;color:#cccc33;letter-spacing:-0.14px">Est.Time: 2.33 Min.</span>
<span class="x t" style="left:220.5px;top:676px;font-size:11px;line-height:15px;color:#f4c430;letter-spacing:0.08px">Color: 3</span>
<span class="x t" style="left:267.5px;top:676px;font-size:11px;line-height:15px;color:#f4c430;letter-spacing:-0.13px">Stitches Count:1476</span>
<span class="x t" style="left:377.5px;top:676px;font-size:11px;line-height:15px;color:#f4c430;letter-spacing:0.20px">Percent: 65.54 %</span>
<span class="x t" style="left:472px;top:676px;font-size:11px;line-height:15px;color:#f4c430;letter-spacing:-0.09px">Est.Time: 14.76 Min.</span>
<span class="x t" style="left:783.5px;top:653px;font-size:11px;line-height:15px;letter-spacing:-0.22px">Hoop Diameter:</span>
<div class="sk" style="left:864px;top:645px;width:52px;height:24px;background:#fff"></div>
<div class="btn cb" style="left:898px;top:647px;width:16px;height:20px;"><svg class="ar" width="7" height="4" viewBox="0 0 7 4" shape-rendering="crispEdges"><path d="M0 0h7v1h-7zM1 1h5v1h-5zM2 2h3v1h-3zM3 3h1v1h-1z"/></svg></div>
<span class="x t" style="left:870.5px;top:648px;font-size:12px;line-height:16px;letter-spacing:0.20px">100</span>
<span class="x t" style="left:783.5px;top:677px;font-size:11px;line-height:15px;letter-spacing:-0.08px">Show Hoop :</span>
<div class="sk chk" style="left:872px;top:677px;width:13px;height:13px;"><svg class="ck" width="7" height="7" viewBox="0 0 7 7" shape-rendering="crispEdges"><path d="M0 2h1v3h-1zM1 3h1v3h-1zM2 4h1v3h-1zM3 3h1v3h-1zM4 2h1v3h-1zM5 1h1v3h-1zM6 0h1v3h-1z"/></svg></div>
<span class="x t" style="left:783.5px;top:701px;font-size:11px;line-height:15px;letter-spacing:-0.08px">Show Boundary:</span>
<div class="sk chk" style="left:872px;top:703px;width:13px;height:13px;"><svg class="ck" width="7" height="7" viewBox="0 0 7 7" shape-rendering="crispEdges"><path d="M0 2h1v3h-1zM1 3h1v3h-1zM2 4h1v3h-1zM3 3h1v3h-1zM4 2h1v3h-1zM5 1h1v3h-1zM6 0h1v3h-1z"/></svg></div>
</div>
</body></html>
